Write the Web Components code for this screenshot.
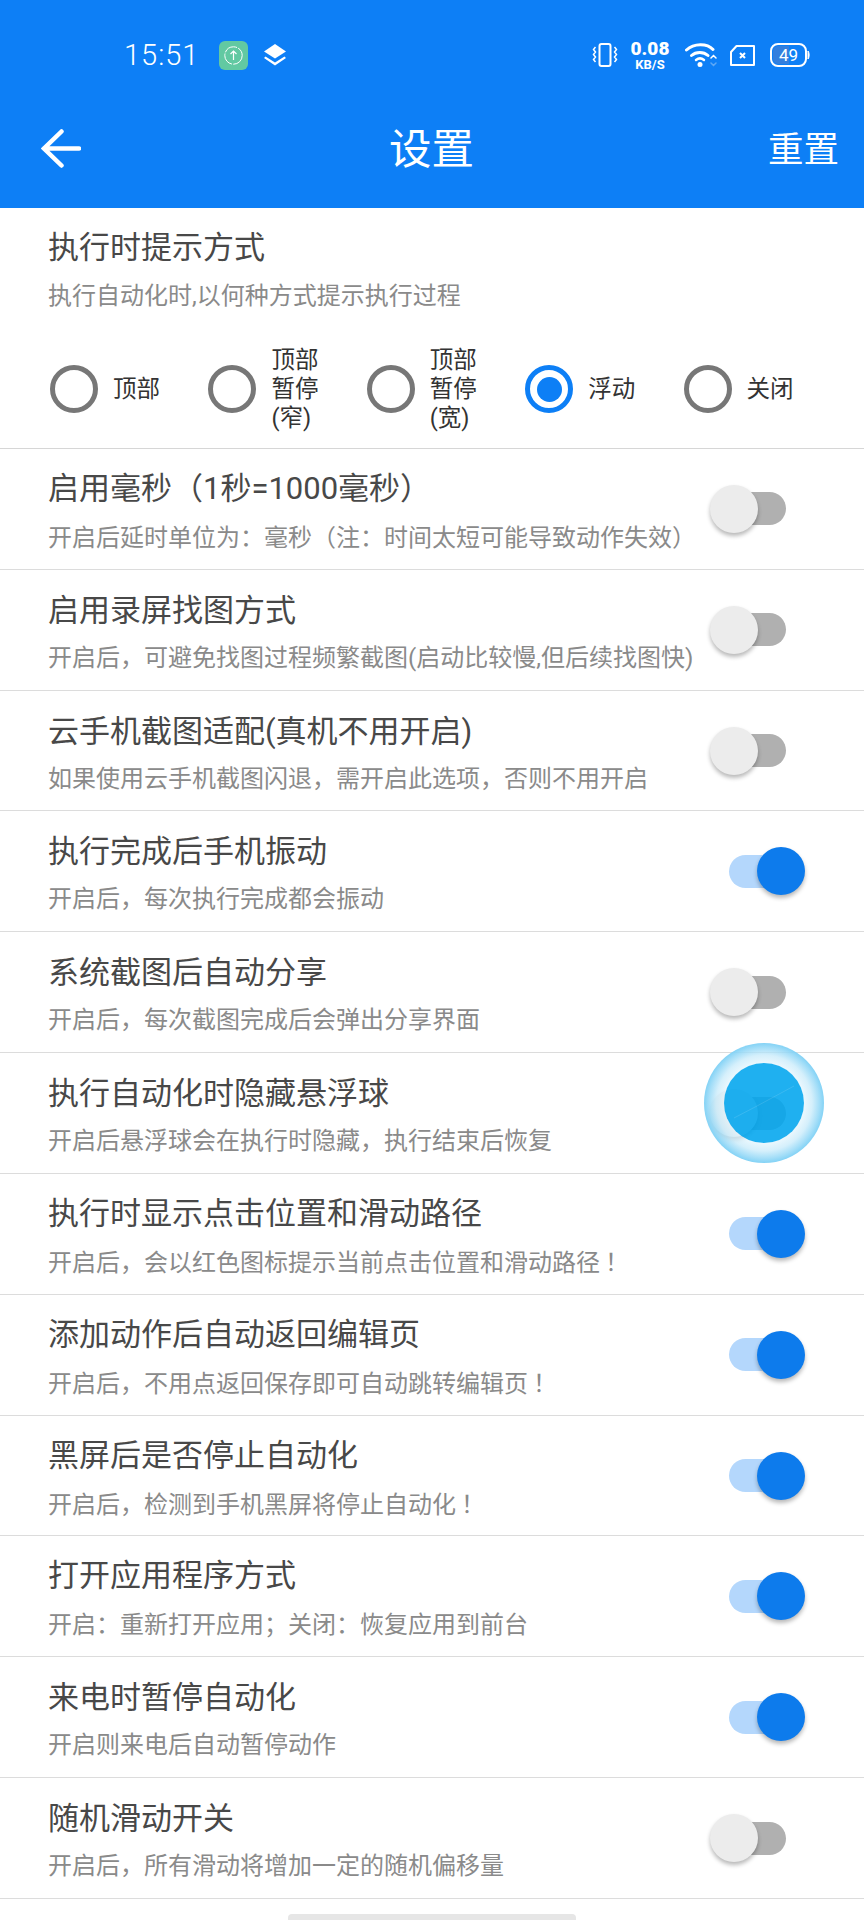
<!DOCTYPE html>
<html lang="zh-CN">
<head>
<meta charset="utf-8">
<title>设置</title>
<style>
html,body{margin:0;padding:0;background:#fff;}
body{width:864px;height:1920px;overflow:hidden;position:relative;font-family:Roboto,"Noto Sans CJK SC",sans-serif;}
.p{font-family:"Noto Sans CJK JP",sans-serif;}
.e{font-family:"Noto Sans CJK JP",sans-serif;padding-left:5px;}
</style>
</head>
<body>
<status-bar></status-bar>
<app-bar heading="设置" action="重置"></app-bar>

<mode-section>
  <span slot="title">执行时提示方式</span>
  <span slot="sub">执行自动化时,以何种方式提示执行过程</span>
  <radio-option>顶部</radio-option>
  <radio-option>顶部<br>暂停<br>(窄)</radio-option>
  <radio-option>顶部<br>暂停<br>(宽)</radio-option>
  <radio-option checked>浮动</radio-option>
  <radio-option>关闭</radio-option>
</mode-section>

<setting-row><span slot="title">启用毫秒（1秒=1000毫秒）</span><span slot="sub">开启后延时单位为<span class="p">：</span>毫秒（注<span class="p">：</span>时间太短可能导致动作失效）</span></setting-row>
<setting-row><span slot="title">启用录屏找图方式</span><span slot="sub">开启后，可避免找图过程频繁截图(启动比较慢,但后续找图快)</span></setting-row>
<setting-row><span slot="title">云手机截图适配(真机不用开启)</span><span slot="sub">如果使用云手机截图闪退，需开启此选项，否则不用开启</span></setting-row>
<setting-row checked><span slot="title">执行完成后手机振动</span><span slot="sub">开启后，每次执行完成都会振动</span></setting-row>
<setting-row><span slot="title">系统截图后自动分享</span><span slot="sub">开启后，每次截图完成后会弹出分享界面</span></setting-row>
<setting-row><span slot="title">执行自动化时隐藏悬浮球</span><span slot="sub">开启后悬浮球会在执行时隐藏，执行结束后恢复</span></setting-row>
<setting-row checked><span slot="title">执行时显示点击位置和滑动路径</span><span slot="sub">开启后，会以红色图标提示当前点击位置和滑动路径<span class="e">！</span></span></setting-row>
<setting-row checked><span slot="title">添加动作后自动返回编辑页</span><span slot="sub">开启后，不用点返回保存即可自动跳转编辑页<span class="e">！</span></span></setting-row>
<setting-row checked><span slot="title">黑屏后是否停止自动化</span><span slot="sub">开启后，检测到手机黑屏将停止自动化<span class="e">！</span></span></setting-row>
<setting-row checked><span slot="title">打开应用程序方式</span><span slot="sub">开启<span class="p">：</span>重新打开应用<span class="p">；</span>关闭<span class="p">：</span>恢复应用到前台</span></setting-row>
<setting-row checked><span slot="title">来电时暂停自动化</span><span slot="sub">开启则来电后自动暂停动作</span></setting-row>
<setting-row><span slot="title">随机滑动开关</span><span slot="sub">开启后，所有滑动将增加一定的随机偏移量</span></setting-row>

<nav-handle></nav-handle>
<float-ball></float-ball>

<script>
const FONT='Roboto,"Noto Sans CJK SC",sans-serif';

const statusTpl=document.createElement('template');
statusTpl.innerHTML=`
<style>
:host{display:flex;align-items:center;box-sizing:border-box;height:90px;padding:20px 54px 0 124px;background:#0d7ff6;color:#fff;font-family:Roboto,sans-serif;}
.time{font-size:29px;font-weight:300;letter-spacing:1px;width:95px;}
.up{width:29px;height:29px;margin-right:16px;}
.layers{width:22px;height:22px;}
.gap{flex:1;}
.vib{width:26px;height:24px;margin-right:13px;}
.speed{display:flex;flex-direction:column;align-items:center;width:38px;font-weight:700;margin-right:16px;}
.speed b{font-size:19px;line-height:19px;}
.speed i{font-style:normal;font-size:13px;line-height:13px;}
.wifi{width:32px;height:26px;margin-right:13px;}
.sim{width:25px;height:21px;margin-right:15px;}
.batt{width:40px;height:24px;position:relative;}
.batt svg{position:absolute;inset:0;}
.batt span{position:absolute;left:0;width:37px;top:0;text-align:center;font-size:17px;line-height:24px;font-weight:400;}
</style>
<span class="time">15:51</span>
<svg class="up" viewBox="0 0 29 29"><rect width="29" height="29" rx="6" fill="#62c9a2"/><circle cx="14.5" cy="14.5" r="8.7" fill="none" stroke="#fff" stroke-width="1" stroke-dasharray="14 1.2"/><path d="M14.5 19V10.5M11.5 13l3-3 3 3" fill="none" stroke="#fff" stroke-width="1.2"/></svg>
<svg class="layers" viewBox="0 0 22 22"><path d="M11 0 22 7.5 11 14.5 0 7.5z" fill="#fff"/><path d="M1.5 12.5 11 18.5 20.5 12.5 22 14 11 21.5 0 14z" fill="#fff"/></svg>
<span class="gap"></span>
<svg class="vib" viewBox="0 0 26 24" fill="none" stroke="#fff" stroke-width="2"><rect x="7.5" y="1" width="11" height="22" rx="2"/><path d="M3.5 4 1.5 6.5 3.5 9 1.5 11.5 3.5 14 1.5 16.5 3.5 19M22.5 4 24.5 6.5 22.5 9 24.5 11.5 22.5 14 24.5 16.5 22.5 19" stroke-width="1.5"/></svg>
<span class="speed"><b>0.08</b><i>KB/S</i></span>
<svg class="wifi" viewBox="0 0 32 26" fill="none" stroke="#fff" stroke-linecap="round"><path d="M1.5 8C9 1 22 1 28 7.5" stroke-width="3"/><path d="M6.5 13.5C11 9.5 18.5 9.5 23 13.5" stroke-width="3"/><path d="M11 18c2.500-2 5.500-2 8 0" stroke-width="2.500"/><circle cx="15" cy="22.500" r="2.500" fill="#fff" stroke="none"/><path d="M26 16l2.500-2.500L31 16" stroke-width="1.500"/><path d="M26 21l2.500 2.500L31 21" stroke="#5ea8f5" stroke-width="1.500"/></svg>
<svg class="sim" viewBox="0 0 25 21" fill="none" stroke="#fff" stroke-width="2"><path d="M1 7 6.500 1H24V20H1z" stroke-linejoin="round"/><path d="M10 8l5 5M15 8l-5 5"/></svg>
<span class="batt"><svg width="40" height="24" viewBox="0 0 40 24"><rect x="1" y="1" width="35" height="22" rx="7" fill="none" stroke="#fff" stroke-width="2"/><path d="M3 8a6 6 0 0 1 5-5H19V21H8a6 6 0 0 1-5-5z" fill="#3d7fd8" opacity=".8"/><path d="M38 8c1.500 1.500 1.500 6.500 0 8z" fill="#fff" stroke="#fff"/></svg><span>49</span></span>
`;
class StatusBar extends HTMLElement{
  constructor(){
    super();
    this.attachShadow({mode:'open'}).append(statusTpl.content.cloneNode(true));
  }
}
customElements.define('status-bar',StatusBar);

const appTpl=document.createElement('template');
appTpl.innerHTML=`
<style>
:host{display:grid;grid-template-columns:1fr auto 1fr;align-items:center;box-sizing:border-box;height:118px;padding:0 25px 0 41px;background:#0d7ff6;color:#fff;font-family:${FONT};}
svg{width:40px;height:40px;display:block;margin-top:-1px;}
.head{font-size:42.500px;line-height:60px;margin:2px 17px 0 0;}
.act{font-size:35.500px;line-height:60px;justify-self:end;margin-top:2px;}
</style>
<svg viewBox="0 0 40 40" fill="none" stroke="#fff" stroke-width="4.500" stroke-linecap="round" stroke-linejoin="miter"><path d="M20.500 2.500 3 19.500 20.500 36.500M3 19.500H38"/></svg>
<span class="head"></span>
<span class="act"></span>
`;
class AppBar extends HTMLElement{
  constructor(){
    super();
    this.attachShadow({mode:'open'}).append(appTpl.content.cloneNode(true));
  }
  connectedCallback(){
    this.shadowRoot.querySelector('.head').textContent=this.getAttribute('heading');
    this.shadowRoot.querySelector('.act').textContent=this.getAttribute('action');
  }
}
customElements.define('app-bar',AppBar);

const textStyles=`
.title{font-size:31px;line-height:44px;color:#484848;font-weight:400;white-space:nowrap;}
.sub{font-size:24px;line-height:34px;color:#8a8a8a;margin-top:8px;white-space:nowrap;}
`;

const sectionTpl=document.createElement('template');
sectionTpl.innerHTML=`
<style>
:host{display:block;box-sizing:border-box;height:241px;padding:18px 0 0 48px;background:#fff;border-bottom:1.500px solid #d6d6d6;font-family:${FONT};}
${textStyles}
.sub{margin-top:9px;}
.group{display:grid;grid-template-columns:repeat(5,158.400px);align-items:center;margin-top:31px;height:90px;}
</style>
<div class="title"><slot name="title"></slot></div>
<div class="sub"><slot name="sub"></slot></div>
<div class="group"><slot></slot></div>
`;
class ModeSection extends HTMLElement{
  constructor(){
    super();
    this.attachShadow({mode:'open'}).append(sectionTpl.content.cloneNode(true));
  }
}
customElements.define('mode-section',ModeSection);

const radioTpl=document.createElement('template');
radioTpl.innerHTML=`
<style>
:host{display:flex;align-items:center;gap:15px;padding-left:2px;font-size:23.500px;line-height:29px;color:#333;}
.ring{box-sizing:border-box;width:48px;height:48px;border-radius:50%;border:5.500px solid #777;flex:none;display:flex;align-items:center;justify-content:center;}
.dot{width:25px;height:25px;border-radius:50%;background:transparent;}
:host([checked]) .ring{border-color:#0d7ff6;}
:host([checked]) .dot{background:#0d7ff6;}
</style>
<span class="ring"><span class="dot"></span></span>
<span><slot></slot></span>
`;
class RadioOption extends HTMLElement{
  constructor(){
    super();
    this.attachShadow({mode:'open'}).append(radioTpl.content.cloneNode(true));
  }
}
customElements.define('radio-option',RadioOption);

const switchTpl=document.createElement('template');
switchTpl.innerHTML=`
<style>
:host{display:block;position:relative;width:96px;height:48px;flex:none;}
.track{position:absolute;top:7.500px;left:19px;width:57px;height:33px;border-radius:17px;background:#b0b0b0;}
.knob{position:absolute;top:0;left:0;width:48px;height:48px;border-radius:50%;background:#ececec;box-shadow:0 3px 4px rgba(0,0,0,.28);}
:host([checked]) .track{background:#b4d7fc;}
:host([checked]) .knob{left:47px;background:#0d7bec;}
</style>
<span class="track"></span>
<span class="knob"></span>
`;
class ToggleSwitch extends HTMLElement{
  constructor(){
    super();
    this.attachShadow({mode:'open'}).append(switchTpl.content.cloneNode(true));
  }
}
customElements.define('toggle-switch',ToggleSwitch);

const rowTpl=document.createElement('template');
rowTpl.innerHTML=`
<style>
:host{display:flex;align-items:center;justify-content:space-between;box-sizing:border-box;height:120.830px;padding:0 58px 0 48px;background:#fff;border-bottom:1.500px solid #dcdcdc;font-family:${FONT};}
${textStyles}
.text{padding-top:4px;}
</style>
<div class="text">
  <div class="title"><slot name="title"></slot></div>
  <div class="sub"><slot name="sub"></slot></div>
</div>
<toggle-switch></toggle-switch>
`;
class SettingRow extends HTMLElement{
  constructor(){
    super();
    this.attachShadow({mode:'open'}).append(rowTpl.content.cloneNode(true));
  }
  connectedCallback(){
    if(this.hasAttribute('checked')) this.shadowRoot.querySelector('toggle-switch').setAttribute('checked','');
  }
}
customElements.define('setting-row',SettingRow);

const handleTpl=document.createElement('template');
handleTpl.innerHTML=`
<style>
:host{display:flex;justify-content:center;padding-top:15px;}
span{width:288px;height:7px;background:#e6e6e6;border-radius:4px 4px 0 0;}
</style>
<span></span>
`;
class NavHandle extends HTMLElement{
  constructor(){
    super();
    this.attachShadow({mode:'open'}).append(handleTpl.content.cloneNode(true));
  }
}
customElements.define('nav-handle',NavHandle);

const ballTpl=document.createElement('template');
ballTpl.innerHTML=`
<style>
:host{display:block;position:absolute;left:704px;top:1043px;width:120px;height:120px;border-radius:50%;background:radial-gradient(circle closest-side,transparent 0,transparent 66%,rgba(220,242,252,.6) 67%,rgba(195,233,250,.7) 80%,rgba(150,217,247,.85) 92%,rgba(125,208,245,.95) 100%);}
.core{position:absolute;left:20px;top:20px;width:80px;height:80px;border-radius:50%;background:rgba(0,165,238,.88);}
svg{position:absolute;inset:0;}
</style>
<div class="core"><svg width="80" height="80" viewBox="0 0 80 80"><path d="M10 55 33 43 70 23" fill="none" stroke="rgba(255,255,255,.12)" stroke-width="1"/></svg></div>
`;
class FloatBall extends HTMLElement{
  constructor(){
    super();
    this.attachShadow({mode:'open'}).append(ballTpl.content.cloneNode(true));
  }
}
customElements.define('float-ball',FloatBall);
</script>
</body>
</html>
